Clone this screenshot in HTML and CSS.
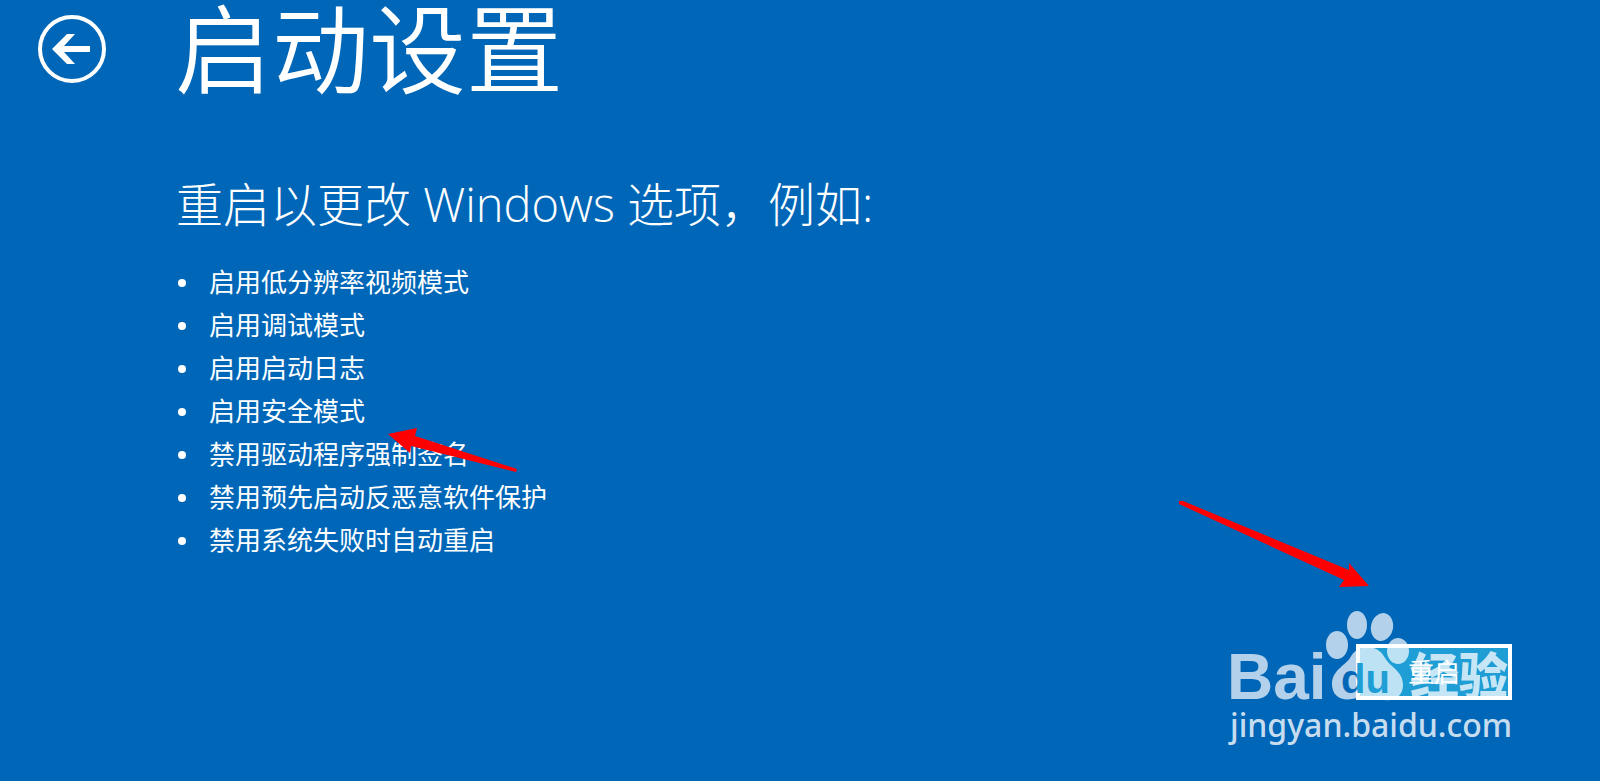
FILE: index.html
```html
<!DOCTYPE html>
<html lang="zh-CN">
<head>
  <meta charset="UTF-8">
  <meta name="viewport" content="width=device-width, initial-scale=1.0">
  <title>启动设置</title>
  <link rel="stylesheet" href="styles.css">
</head>
<body>
  <div class="screen">
    <!-- Header -->
    <header class="header">
      <button class="back-btn" type="button" aria-label="返回">
        <svg viewBox="0 0 70 70">
          <circle cx="35" cy="35" r="32" fill="none" stroke="#fff" stroke-width="4" />
          <path d="M15 35L30 20H38L27 32H53V38H27L38 50H30Z" fill="#fff" />
        </svg>
      </button>
      <h1 class="title">启动设置</h1>
    </header>

    <!-- Options -->
    <main class="content">
      <h2 class="subtitle">重启以更改 Windows 选项，例如:</h2>
      <ul class="options">
        <li>启用低分辨率视频模式</li>
        <li>启用调试模式</li>
        <li>启用启动日志</li>
        <li>启用安全模式</li>
        <li>禁用驱动程序强制签名</li>
        <li>禁用预先启动反恶意软件保护</li>
        <li>禁用系统失败时自动重启</li>
      </ul>
    </main>

    <footer class="footer">
      <button class="restart-btn" type="button">重启</button>
    </footer>

    <!-- Arrows -->
    <svg class="arrow arrow-option" viewBox="0 0 132 46">
      <path d="M1 7L30 1L28 9L130 42L129 45L24 19L23 26Z" fill="#fe0000" />
    </svg>
    <svg class="arrow arrow-restart" viewBox="0 0 192 88">
      <path d="M1 1L5 1L171 70V63L191 86L161 87L166 80L1 4Z" fill="#fe0000" />
    </svg>

    <!-- Watermark -->
    <svg class="watermark" viewBox="0 0 320 160">
      <defs>
        <linearGradient id="duFill" gradientUnits="userSpaceOnUse" x1="146" y1="0" x2="147" y2="0">
          <stop offset="0" stop-color="#0067b8" />
          <stop offset="1" stop-color="#1f9dd5" />
        </linearGradient>
      </defs>
      <g fill="#fff" fill-opacity="0.7">
        <text class="wm-bai" x="17" y="99">Bai</text>
        <ellipse cx="127" cy="45" rx="11" ry="14" />
        <ellipse cx="147" cy="25" rx="10" ry="14" />
        <ellipse cx="172" cy="27" rx="11" ry="14" transform="rotate(12 172 27)" />
        <ellipse cx="188" cy="51" rx="11" ry="13" />
        <path d="M157 47C149 47 144 51 140 58C136 65 122 70 122 84C122 96 131 101 142 99C152 97 160 97 170 99C181 103 193 98 193 85C193 71 181 68 175 58C171 51 166 47 157 47Z" />
      </g>
      <text class="wm-du" x="131" y="93" fill="url(#duFill)">du</text>
      <text class="wm-cn" x="200" y="94">经验</text>
      <text class="wm-url" x="20" y="137">jingyan.baidu.com</text>
    </svg>
  </div>
</body>
</html>
```

FILE: styles.css
```css
/* General Styles */
* {
  box-sizing: border-box;
}
body {
  margin: 0;
  background-color: #0067b8;
  color: #fff;
  font-family: "Open Sans", "Noto Sans CJK SC", sans-serif;
}
.screen {
  position: relative;
  display: flex;
  flex-direction: column;
  min-height: 100vh;
  overflow: hidden;
}

/* Header */
.header {
  display: flex;
  align-items: flex-start;
  gap: 68px;
  padding-left: 37px;
}
.back-btn {
  width: 70px;
  height: 70px;
  margin-top: 14px;
  padding: 0;
  border: none;
  background: none;
  cursor: pointer;
}
.back-btn svg {
  display: block;
}
.title {
  margin: 0;
  font-family: "Noto Sans CJK SC", sans-serif;
  font-size: 97px;
  font-weight: 350;
  line-height: 88px;
}

/* Options */
.content {
  flex: 1;
  padding: 84px 40px 0 176px;
}
.subtitle {
  margin: 0;
  font-size: 47px;
  font-weight: 300;
  line-height: 64px;
}
.options {
  margin: 25px 0 0;
  padding: 0;
  list-style: none;
  font-size: 26px;
  line-height: 43px;
}
.options li {
  display: flex;
  align-items: center;
  gap: 23px;
}
.options li::before {
  content: "";
  width: 8px;
  height: 8px;
  margin-left: 2px;
  border-radius: 50%;
  background-color: #fff;
}

/* Restart Button */
.footer {
  display: flex;
  justify-content: flex-end;
  padding: 0 88px 81px 0;
}
.restart-btn {
  width: 156px;
  height: 56px;
  padding: 0;
  border: 4px solid #fff;
  background-color: #1f9dd5;
  color: #fff;
  font-family: inherit;
  font-size: 26px;
  line-height: 48px;
  cursor: pointer;
}

/* Arrows */
.arrow {
  position: absolute;
  pointer-events: none;
}
.arrow-option {
  left: 387px;
  top: 427px;
  width: 132px;
}
.arrow-restart {
  right: 230px;
  bottom: 193px;
  width: 192px;
}

/* Watermark */
.watermark {
  position: absolute;
  right: 70px;
  bottom: 21px;
  width: 320px;
  pointer-events: none;
}
.wm-bai {
  font-family: "Liberation Sans", sans-serif;
  font-size: 64px;
  font-weight: 700;
}
.wm-du {
  font-family: "Liberation Sans", sans-serif;
  font-size: 40px;
  font-weight: 700;
}
.wm-cn {
  font-family: "Noto Sans CJK SC", sans-serif;
  font-size: 49px;
  font-weight: 900;
  fill: #fff;
  fill-opacity: 0.75;
}
.wm-url {
  font-family: "Noto Sans", sans-serif;
  font-size: 32px;
  font-weight: 500;
  fill: #fff;
  fill-opacity: 0.8;
}
```
